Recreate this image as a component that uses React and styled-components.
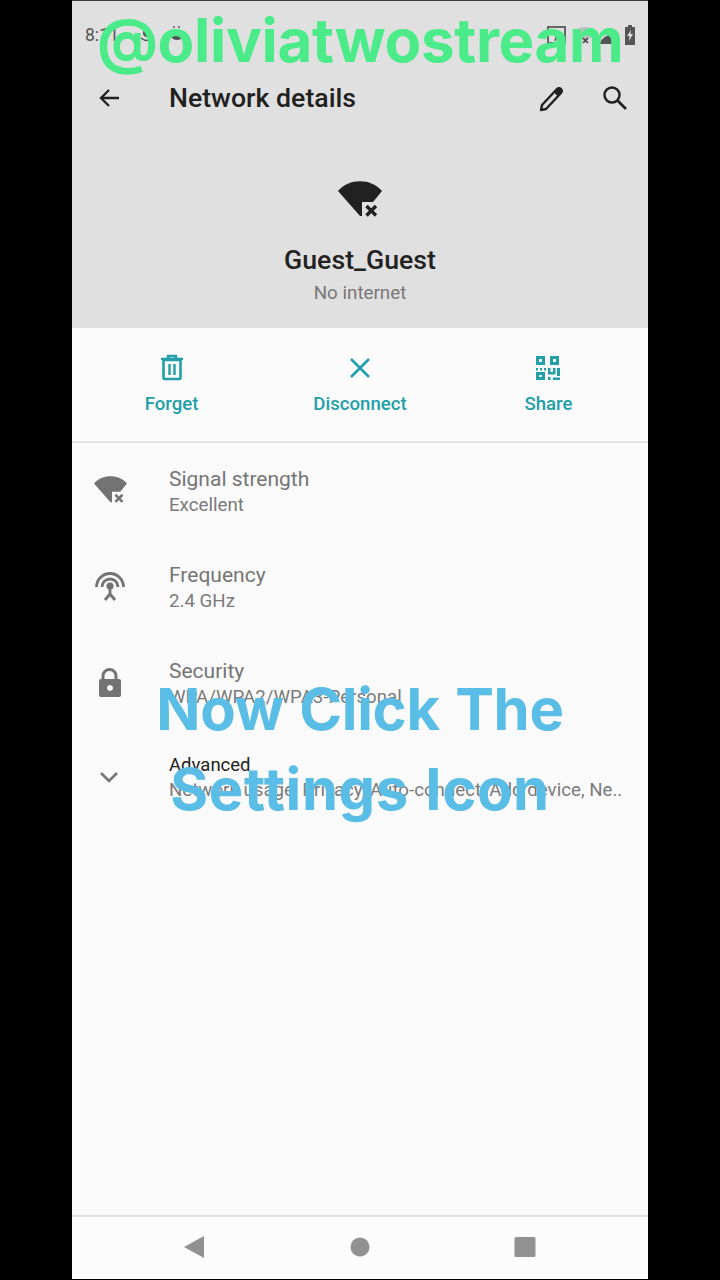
import React from "react";
import styled, { createGlobalStyle } from "styled-components";

const Global = createGlobalStyle`
  html, body { margin: 0; padding: 0; background: #000; }
  body { font-family: Roboto, "Noto Sans", sans-serif; }
`;

const Page = styled.div`
  width: 720px;
  height: 1280px;
  background: #000;
  display: flex;
  justify-content: center;
  overflow: hidden;
`;
const Phone = styled.div`
  position: relative;
  width: 576px;
  height: 1279px;
  display: flex;
  flex-direction: column;
  background: #fafafa;
  overflow: hidden;
`;
const Header = styled.header`
  height: 328px;
  flex: none;
  background: #e0e0e0;
  border-top: 1px solid #3a3a3a;
  box-sizing: border-box;
  display: flex;
  flex-direction: column;
`;
const StatusBar = styled.div`
  height: 50px;
  padding: 18px 12px 0 13px;
  box-sizing: border-box;
  display: flex;
  align-items: center;
  gap: 10px;
  flex: none;
`;
const Clock = styled.span`
  font-size: 17.5px;
  color: #555;
  width: 43px;
`;
const StatusSpacer = styled.div`
  flex: 1;
`;
const Toolbar = styled.div`
  height: 44px;
  margin-top: 25px;
  padding: 0 19px 0 26px;
  flex: none;
  display: flex;
  align-items: center;
`;
const Title = styled.h1`
  flex: 1;
  margin: 0 0 0 47px;
  font-size: 26.7px;
  font-weight: 500;
  color: #212121;
`;
const ToolIcon = styled.svg`
  width: ${(p) => p.$size || 28}px;
  height: ${(p) => p.$size || 28}px;
  margin-left: ${(p) => p.$gap || 0}px;
  flex: none;
`;
const Hero = styled.div`
  flex: 1;
  display: flex;
  flex-direction: column;
  align-items: center;
  padding-top: 61px;
`;
const NetworkName = styled.div`
  font-size: 26.7px;
  font-weight: 500;
  line-height: 32px;
  margin-top: 27px;
  color: #222;
`;
const NetworkStatus = styled.div`
  font-size: 18.8px;
  line-height: 22px;
  margin-top: 6px;
  color: #777;
`;
const Actions = styled.div`
  height: 115px;
  flex: none;
  border-bottom: 2px solid #e2e2e2;
  box-sizing: border-box;
  display: grid;
  grid-template-columns: 199px 178px 199px;
`;
const Action = styled.div`
  display: flex;
  flex-direction: column;
  align-items: center;
  padding-top: 26px;
  color: #229fa9;
`;
const ActionLabel = styled.span`
  font-size: 18.6px;
  font-weight: 500;
  line-height: 22px;
  margin-top: 11px;
`;
const List = styled.div`
  padding-top: 20px;
  display: flex;
  flex-direction: column;
`;
const Row = styled.div`
  height: 96px;
  display: flex;
  align-items: flex-start;
  padding-top: ${(p) => (p.$tight ? 2 : 3)}px;
  box-sizing: border-box;
`;
const RowIcon = styled.div`
  width: 97px;
  flex: none;
  padding-left: ${(p) => p.$left || 20}px;
  padding-top: ${(p) => p.$top}px;
  box-sizing: border-box;
  display: flex;
`;
const RowText = styled.div`
  min-width: 0;
  width: 460px;
  display: flex;
  flex-direction: column;
`;
const RowTitle = styled.div`
  font-size: ${(p) => (p.$strong ? 18.5 : 21)}px;
  line-height: ${(p) => (p.$strong ? 25 : 27)}px;
  color: ${(p) => (p.$strong ? "#222" : "#757575")};
`;
const RowSub = styled.div`
  font-size: 18.7px;
  line-height: 24px;
  color: #7a7a7a;
  white-space: nowrap;
`;
const Spacer = styled.div`
  flex: 1;
`;
const NavBar = styled.nav`
  height: 64px;
  flex: none;
  border-top: 2px solid #e2e2e2;
  background: #fcfcfc;
  box-sizing: border-box;
  display: grid;
  grid-template-columns: 1fr 1fr 1fr;
  padding: 0 41px 2px 40px;
  align-items: center;
  justify-items: center;
`;
const NavIcon = styled.svg`
  width: 24px;
  height: 24px;
  fill: #919191;
`;
const Watermark = styled.div`
  position: absolute;
  left: 25px;
  top: 5px;
  font-family: Inter, sans-serif;
  font-size: 60px;
  line-height: 70px;
  font-weight: 700;
  letter-spacing: -0.35px;
  color: #4ceb8a;
  white-space: nowrap;
`;
const Caption = styled.div`
  position: absolute;
  left: 0;
  top: 669px;
  width: 576px;
  text-align: center;
  font-family: Inter, sans-serif;
  font-size: 58px;
  line-height: 80px;
  font-weight: 700;
  color: #59bde5;
`;
const CaptionLine = styled.div`
  letter-spacing: ${(p) => p.$spacing}px;
  word-spacing: 2px;
`;

const WifiX = ({ size = 44, fill = "#212121" }) => (
  <svg width={size} height={(size * 36) / 44} viewBox="0 0 44 36" style={{ display: "block" }}>
    <path fill={fill} d="M0 10 C11 -3 33 -3 44 10 L35 21 H24 V35 H22 Z" />
    <path stroke={fill} strokeWidth="3.4" d="M28.5 25 L38 34.5 M38 25 L28.5 34.5" fill="none" />
  </svg>
);

const App = () => (
  <Page>
    <Global />
    <Phone>
      <Header>
        <StatusBar>
          <Clock>8:11</Clock>
          <svg width="18" height="18" viewBox="0 0 18 18">
            <circle cx="9" cy="7" r="4" fill="#555" />
            <path d="M3 12 q6 5 12 0" stroke="#555" strokeWidth="1.5" fill="none" />
          </svg>
          <svg width="22" height="22" viewBox="0 0 22 22">
            <ellipse cx="11" cy="12" rx="6" ry="4" fill="#555" />
            <circle cx="8" cy="3" r="1" fill="#555" />
            <circle cx="13" cy="3" r="1" fill="#555" />
          </svg>
          <StatusSpacer />
          <svg width="80" height="24" viewBox="0 0 80 24" style={{ marginRight: -4 }}>
            <rect x="1" y="4" width="17" height="16" fill="none" stroke="#666" strokeWidth="2" />
            <path d="M8 18 a3 3 0 0 1 3 -3 M8 14 a6 6 0 0 1 6 4" stroke="#555" strokeWidth="1.3" fill="none" />
            <path d="M27 8 q11 -8 22 0 l-11 12 z" fill="#bdbdbd" />
            <path d="M36 15 l5 5 m0 -5 l-5 5" stroke="#444" strokeWidth="1.6" />
            <path d="M52 21 q5 -10 14 -9 l1 -7 v16 z" fill="#555" />
          </svg>
          <svg width="12" height="20" viewBox="0 0 12 20" style={{ marginLeft: -9 }}>
            <path d="M4 0 h4 v2 h3 v18 h-10 v-18 h3 z" fill="#555" />
            <path d="M7 5 L3 11 h2.5 L5 16 L9 9 h-2.5 z" fill="#ddd" />
          </svg>
        </StatusBar>
        <Toolbar>
          <ToolIcon viewBox="0 0 24 24" $size={24}>
            <path d="M21 12 H4 M11 4 L3 12 L11 20" stroke="#212121" strokeWidth="2.3" fill="none" />
          </ToolIcon>
          <Title>Network details</Title>
          <ToolIcon viewBox="0 0 28 28">
            <path d="M4 21 L19 5 a2.6 2.6 0 0 1 4 4 L8 25 L3 26 Z M17 8 L21 12" stroke="#212121" strokeWidth="2.4" fill="none" strokeLinejoin="round" />
            <path d="M19 5 a2.6 2.6 0 0 1 4 4 L21 11 L17 7 Z" fill="#212121" />
          </ToolIcon>
          <ToolIcon viewBox="0 0 28 28" $gap={35}>
            <circle cx="11" cy="11" r="7.5" stroke="#212121" strokeWidth="2.5" fill="none" />
            <path d="M16.5 16.5 L25 25" stroke="#212121" strokeWidth="2.6" />
          </ToolIcon>
        </Toolbar>
        <Hero>
          <WifiX />
          <NetworkName>Guest_Guest</NetworkName>
          <NetworkStatus>No internet</NetworkStatus>
        </Hero>
      </Header>
      <Actions>
        <Action>
          <svg width="24" height="28" viewBox="0 0 24 28">
            <path d="M1 5 h22 M8 4 V2 h8 v2" stroke="currentColor" strokeWidth="2.4" fill="none" />
            <rect x="3.5" y="6" width="17" height="19" rx="1" stroke="currentColor" strokeWidth="2.6" fill="none" />
            <path d="M9.5 10 v11 M14.5 10 v11" stroke="currentColor" strokeWidth="2.4" />
          </svg>
          <ActionLabel>Forget</ActionLabel>
        </Action>
        <Action>
          <svg width="28" height="28" viewBox="0 0 28 28">
            <path d="M5 5 L23 23 M23 5 L5 23" stroke="currentColor" strokeWidth="2.6" />
          </svg>
          <ActionLabel>Disconnect</ActionLabel>
        </Action>
        <Action>
          <svg width="28" height="28" viewBox="1 0 28 28">
            <g fill="none" stroke="currentColor" strokeWidth="3">
              <rect x="3.5" y="3.5" width="6" height="6" />
              <rect x="17.5" y="3.5" width="6" height="6" />
              <rect x="3.5" y="19.5" width="6" height="5" />
            </g>
            <g fill="currentColor">
              <rect x="2" y="14" width="2" height="2.5" />
              <rect x="6" y="14" width="2" height="2.5" />
              <rect x="10" y="14" width="2" height="2.5" />
              <rect x="14" y="14" width="2.5" height="6" />
              <rect x="14" y="18" width="7" height="2.5" />
              <rect x="19" y="14" width="2.5" height="6" />
              <rect x="23" y="14" width="3" height="8" />
              <rect x="14" y="23" width="2.5" height="3" />
              <rect x="19" y="23.5" width="7" height="2.5" />
            </g>
          </svg>
          <ActionLabel>Share</ActionLabel>
        </Action>
      </Actions>
      <List>
        <Row>
          <RowIcon $top={10} $left={22}>
            <WifiX size={33} fill="#737373" />
          </RowIcon>
          <RowText>
            <RowTitle>Signal strength</RowTitle>
            <RowSub>Excellent</RowSub>
          </RowText>
        </Row>
        <Row>
          <RowIcon $top={8} $left={21}>
            <svg width="34" height="34" viewBox="0 0 34 34">
              <g fill="none" stroke="#737373" strokeWidth="2.8">
                <path d="M3.5 17 a13.5 13.5 0 0 1 27 0" />
                <path d="M9 17 a8 8 0 0 1 16 0" />
                <path d="M17 16 V24 L12 30 M17 24 L22 30" />
              </g>
              <circle cx="17" cy="16" r="3.6" fill="#737373" />
            </svg>
          </RowIcon>
          <RowText>
            <RowTitle>Frequency</RowTitle>
            <RowSub>2.4 GHz</RowSub>
          </RowText>
        </Row>
        <Row>
          <RowIcon $top={10}>
            <svg width="36" height="30" viewBox="0 0 34 30">
              <path d="M10 11 V8 a6.5 6.5 0 0 1 13 0 V11" stroke="#737373" strokeWidth="3" fill="none" />
              <path fillRule="evenodd" fill="#737373" d="M8 11 h18 a2 2 0 0 1 2 2 v14 a2 2 0 0 1 -2 2 h-18 a2 2 0 0 1 -2 -2 v-14 a2 2 0 0 1 2 -2 Z M17 17 a3 3 0 1 0 .01 0 Z" />
            </svg>
          </RowIcon>
          <RowText>
            <RowTitle>Security</RowTitle>
            <RowSub>WPA/WPA2/WPA3-Personal</RowSub>
          </RowText>
        </Row>
        <Row $tight>
          <RowIcon $top={16}>
            <svg width="34" height="20" viewBox="0 0 34 20">
              <path d="M9 4 L17 12 L25 4" stroke="#757575" strokeWidth="2.6" fill="none" />
            </svg>
          </RowIcon>
          <RowText>
            <RowTitle $strong>Advanced</RowTitle>
            <RowSub>Network usage, Privacy, Auto-connect, Add device, Ne..</RowSub>
          </RowText>
        </Row>
      </List>
      <Spacer />
      <NavBar>
        <NavIcon viewBox="0 0 24 24">
          <path d="M1 12 L21 1 V23 Z" />
        </NavIcon>
        <NavIcon viewBox="0 0 24 24">
          <circle cx="12" cy="12" r="9.5" />
        </NavIcon>
        <NavIcon viewBox="0 0 24 24">
          <rect x="1.5" y="2" width="21" height="20" rx="1.5" />
        </NavIcon>
      </NavBar>
      <Watermark>@oliviatwostream</Watermark>
      <Caption>
        <CaptionLine $spacing={-0.3}>Now Click The</CaptionLine>
        <CaptionLine $spacing={0.6}>Settings Icon</CaptionLine>
      </Caption>
    </Phone>
  </Page>
);

export default App;
